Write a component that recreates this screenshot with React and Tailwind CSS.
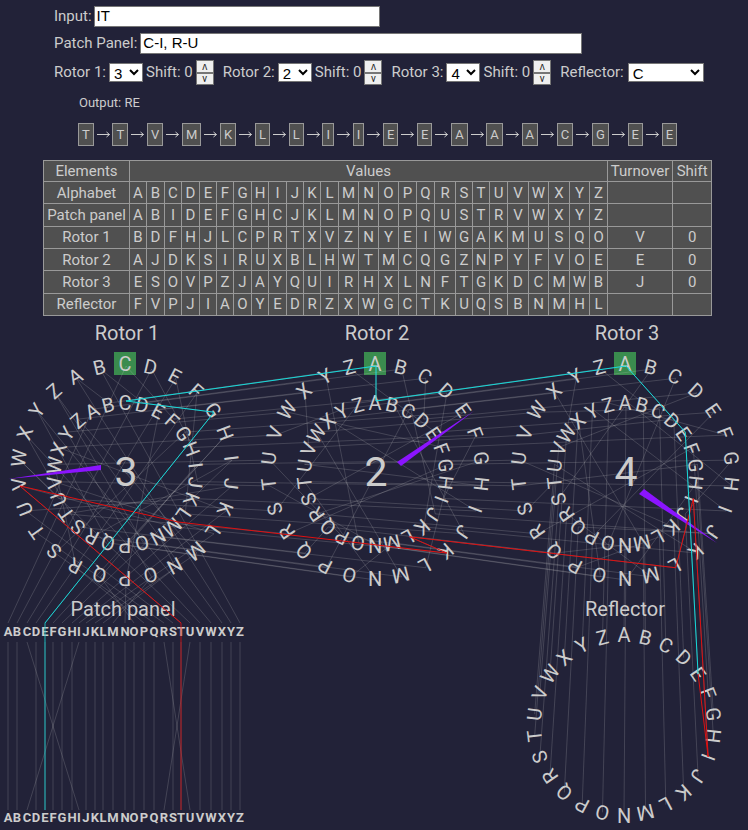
import { useState } from "react";

const ALPHABET = "ABCDEFGHIJKLMNOPQRSTUVWXYZ";

const ROWS = [
  { name: "Alphabet", values: ALPHABET, turnover: "", shift: "" },
  { name: "Patch panel", values: "ABIDEFGHCJKLMNOPQUSTRVWXYZ", turnover: "", shift: "" },
  { name: "Rotor 1", values: "BDFHJLCPRTXVZNYEIWGAKMUSQO", turnover: "V", shift: "0" },
  { name: "Rotor 2", values: "AJDKSIRUXBLHWTMCQGZNPYFVOE", turnover: "E", shift: "0" },
  { name: "Rotor 3", values: "ESOVPZJAYQUIRHXLNFTGKDCMWB", turnover: "J", shift: "0" },
  { name: "Reflector", values: "FVPJIAOYEDRZXWGCTKUQSBNMHL", turnover: "", shift: "" },
];

const COLUMNS = [86, 17, 18, 17, 18, 17, 17, 18, 17, 18, 17, 17, 18, 20, 20, 20, 18, 18, 21, 17, 17, 18, 21, 20, 21, 20, 18, 65, 39];

const PATH = "TTVMKLLIIEEAAACGEE".split("");

const ROTORS = [
  { label: "Rotor 1", type: "3", x: 125, offset: 2, wiring: ROWS[2].values, pointer: "101,465 101,470 8,479" },
  { label: "Rotor 2", type: "2", x: 375, offset: 0, wiring: ROWS[3].values, pointer: "397,462 401,466 474,411" },
  { label: "Rotor 3", type: "4", x: 625, offset: 0, wiring: ROWS[4].values, pointer: "639,494 644,489 717,543" },
];

const PATCH_X = [8, 17, 27, 36, 45, 53, 62, 72, 79, 86, 95, 103, 113, 125, 134, 144, 154, 164, 173, 181, 190, 200, 211, 222, 231, 240];

const TOP = 320;

function onCircle(cx, cy, r, position) {
  const a = (position / 26) * Math.PI * 2;
  return [cx + r * Math.sin(a), cy - r * Math.cos(a)];
}

const outer = (rotor, p) => onCircle(ROTORS[rotor].x + 1, 473 - TOP, 107, p);
const inner = (rotor, p) => onCircle(ROTORS[rotor].x + 1, 473 - TOP, 72, p);
const reflector = (p) => onCircle(624, 725 - TOP, 90, p);
const patchTop = (p) => [PATCH_X[p], 623 - TOP];
const contactM = [178, 522 - TOP];

function Wire({ from, to, color = "#cccccc", opacity = 0.2 }) {
  return <line x1={from[0]} y1={from[1]} x2={to[0]} y2={to[1]} stroke={color} strokeOpacity={opacity} />;
}

function Ring({ cx, cy, r, offset = 0, size = 20 }) {
  return ALPHABET.split("").map((_, p) => (
    <text
      key={p}
      x={cx}
      y={cy - r + 7}
      fontSize={size}
      textAnchor="middle"
      transform={`rotate(${(p * 360) / 26} ${cx} ${cy})`}
    >
      {ALPHABET[(p + offset) % 26]}
    </text>
  ));
}

function PatchRow({ y }) {
  return ALPHABET.split("").map((letter, i) => (
    <text key={letter} x={PATCH_X[i]} y={y} fontSize={13} fontWeight={700} textAnchor="middle">
      {letter}
    </text>
  ));
}

function Diagram() {
  const positions = ALPHABET.split("").map((_, i) => i);
  const cyan = "#14d9d9";
  const red = "#e01010";
  return (
    <svg viewBox="0 0 748 510" className="block h-auto w-full" fill="#cccccc" role="img" aria-label="Rotor wiring">
      {ROTORS.map((r) => (
        <g key={r.label}>
          <rect x={r.x - 11} y={352 - TOP} width={22} height={23} fill="#3a8c4e" />
          <text x={r.x + 2} y={340 - TOP} fontSize={20} textAnchor="middle">{r.label}</text>
          <text x={r.x + 1} y={486 - TOP} fontSize={41} textAnchor="middle">{r.type}</text>
          <Ring cx={r.x} cy={471 - TOP} r={107} offset={r.offset} />
          <Ring cx={r.x} cy={474 - TOP} r={71} offset={r.offset} />
        </g>
      ))}
      <text x={123} y={616 - TOP} fontSize={20} textAnchor="middle">Patch panel</text>
      <text x={625} y={616 - TOP} fontSize={20} textAnchor="middle">Reflector</text>
      <Ring cx={624} cy={725 - TOP} r={90} />
      <PatchRow y={636 - TOP} />
      <PatchRow y={822 - TOP} />

      {ROTORS.map((r, k) =>
        positions.map((p) => {
          const target = ALPHABET.indexOf(r.wiring[(p + r.offset) % 26]);
          return <Wire key={`${k}-${p}`} from={outer(k, p)} to={inner(k, (target - r.offset + 26) % 26)} />;
        }),
      )}
      {positions.map((p) => (
        <g key={p}>
          <Wire from={patchTop(p)} to={outer(0, p)} />
          <Wire from={inner(0, p)} to={outer(1, p)} />
          <Wire from={inner(1, p)} to={outer(2, p)} />
          <Wire from={inner(2, p)} to={reflector(p)} />
          <Wire
            from={[PATCH_X[p], 642 - TOP]}
            to={[PATCH_X[ALPHABET.indexOf(ROWS[1].values[p])], 810 - TOP]}
          />
        </g>
      ))}

      {ROTORS.map((r) => (
        <polygon
          key={r.label}
          points={r.pointer}
          fill="#8b14ff"
          transform={`translate(0 ${-TOP})`}
        />
      ))}

      <g>
        <Wire from={[181, 810 - TOP]} to={patchTop(19)} color={red} opacity={0.8} />
        <Wire from={patchTop(19)} to={outer(0, 19)} color={red} opacity={1} />
        <Wire from={outer(0, 19)} to={contactM} color={red} opacity={1} />
        <Wire from={contactM} to={outer(1, 10)} color={red} opacity={1} />
        <Wire from={outer(1, 10)} to={inner(1, 11)} color={red} opacity={1} />
        <Wire from={inner(1, 11)} to={outer(2, 11)} color={red} opacity={1} />
        <Wire from={outer(2, 11)} to={inner(2, 8)} color={red} opacity={1} />
        <Wire from={inner(2, 8)} to={reflector(8)} color={red} opacity={1} />
        <Wire from={reflector(8)} to={reflector(4)} color={red} opacity={1} />
        <Wire from={reflector(4)} to={inner(2, 4)} color={cyan} opacity={1} />
        <Wire from={inner(2, 4)} to={outer(2, 0)} color={cyan} opacity={1} />
        <Wire from={outer(2, 0)} to={inner(1, 0)} color={cyan} opacity={1} />
        <Wire from={inner(1, 0)} to={outer(1, 0)} color={cyan} opacity={1} />
        <Wire from={outer(1, 0)} to={inner(0, 0)} color={cyan} opacity={1} />
        <Wire from={inner(0, 0)} to={outer(0, 4)} color={cyan} opacity={1} />
        <Wire from={outer(0, 4)} to={patchTop(4)} color={cyan} opacity={1} />
        <Wire from={patchTop(4)} to={[45, 810 - TOP]} color={cyan} opacity={0.8} />
      </g>
    </svg>
  );
}

const FIELD = "border border-[#767676] bg-white text-black font-['Liberation_Sans',sans-serif]";
const CELL = "border border-[#999999] bg-[#505050] p-0 font-normal";

function RotorControl({ index, initial }) {
  const [type, setType] = useState(initial);
  const [shift, setShift] = useState(0);
  const id = `rotor-${index}`;
  return (
    <div className="flex items-center gap-[3px]">
      <label htmlFor={id}>Rotor {index}:</label>
      <select id={id} value={type} onChange={(e) => setType(e.target.value)} className={`h-[19px] w-[34px] text-[15px] ${FIELD}`}>
        {["1", "2", "3", "4", "5"].map((v) => (
          <option key={v}>{v}</option>
        ))}
      </select>
      <span>Shift: {shift}</span>
      <div className="flex w-[18px] flex-col text-[10px] leading-none text-[#222]">
        <button type="button" aria-label={`Increase shift ${index}`} onClick={() => setShift((shift + 1) % 26)} className="h-[13px] border border-[#767676] bg-[#efefef]">
          ʌ
        </button>
        <button type="button" aria-label={`Decrease shift ${index}`} onClick={() => setShift((shift + 25) % 26)} className="h-3 border border-[#767676] bg-[#efefef]">
          v
        </button>
      </div>
    </div>
  );
}

function Arrow() {
  return (
    <span className="flex flex-1 justify-center">
      <svg width="13" height="7" viewBox="0 0 13 7" fill="none" stroke="#cccccc" aria-hidden="true">
        <path d="M0 3.5H12.5M9.5 1L12.5 3.5L9.5 6" />
      </svg>
    </span>
  );
}

export default function App() {
  const [input, setInput] = useState("IT");
  const [patch, setPatch] = useState("C-I, R-U");
  const [kind, setKind] = useState("C");
  return (
    <main className="min-h-screen bg-[#222238] font-[Roboto,sans-serif] text-[#cccccc]">
      <form className="flex flex-col gap-[6px] pt-[6px] pl-[54px] text-[15px]">
        <div className="flex h-[21px] items-center gap-[2px]">
          <label htmlFor="input">Input:</label>
          <input id="input" value={input} onChange={(e) => setInput(e.target.value)} className={`h-[21px] w-[286px] px-[2px] ${FIELD}`} />
        </div>
        <div className="flex h-[21px] items-center gap-[3px]">
          <label htmlFor="patch">Patch Panel:</label>
          <input id="patch" value={patch} onChange={(e) => setPatch(e.target.value)} className={`h-[21px] w-[442px] px-[2px] ${FIELD}`} />
        </div>
        <div className="flex h-[25px] items-center gap-[9px] whitespace-nowrap">
          <RotorControl index={1} initial="3" />
          <RotorControl index={2} initial="2" />
          <RotorControl index={3} initial="4" />
          <div className="flex items-center gap-1">
            <label htmlFor="reflector">Reflector:</label>
            <select id="reflector" value={kind} onChange={(e) => setKind(e.target.value)} className={`h-[19px] w-[76px] ${FIELD}`}>
              <option>B</option>
              <option>C</option>
            </select>
          </div>
        </div>
      </form>

      <p className="mt-2 pl-[79px] text-[13px] leading-5">Output: RE</p>

      <div className="mt-[10px] ml-[78px] flex w-[599px] items-center text-[13px]">
        {PATH.map((letter, i) => (
          <div key={i} className={i > 0 ? "flex grow items-center" : "flex items-center"}>
            {i > 0 && <Arrow />}
            <span className="h-[23px] border border-[#999999] bg-[#505050] px-[3px] leading-[21px]">{letter}</span>
          </div>
        ))}
      </div>

      <table className="mt-[14px] ml-[43px] h-[156px] w-[668px] table-fixed border-collapse text-center text-[15px] leading-5">
        <colgroup>
          {COLUMNS.map((width, i) => (
            <col key={i} style={{ width }} />
          ))}
        </colgroup>
        <thead>
          <tr>
            <th className={CELL}>Elements</th>
            <th colSpan={26} className={CELL}>Values</th>
            <th className={CELL}>Turnover</th>
            <th className={CELL}>Shift</th>
          </tr>
        </thead>
        <tbody>
          {ROWS.map((row) => (
            <tr key={row.name}>
              <th scope="row" className={CELL}>{row.name}</th>
              {row.values.split("").map((v, i) => (
                <td key={i} className={CELL}>{v}</td>
              ))}
              <td className={CELL}>{row.turnover}</td>
              <td className={CELL}>{row.shift}</td>
            </tr>
          ))}
        </tbody>
      </table>

      <div className="mt-1">
        <Diagram />
      </div>
    </main>
  );
}
